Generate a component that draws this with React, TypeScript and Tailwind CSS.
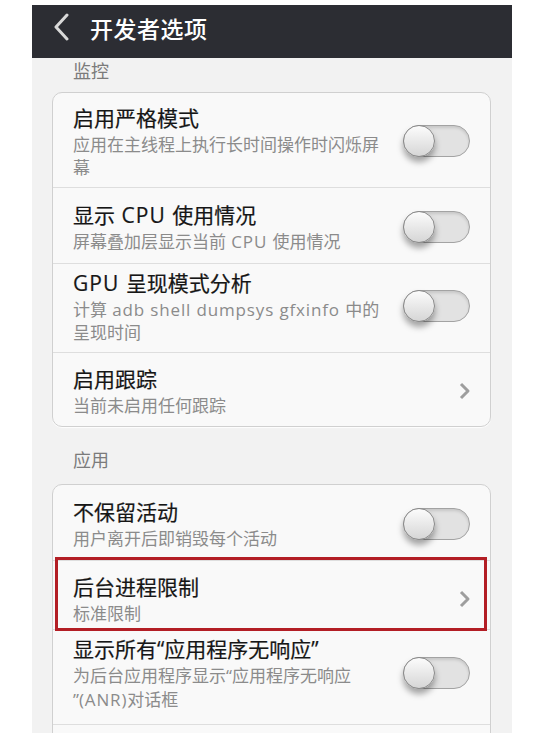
type Item = {
  title: string;
  sub: string[];
  control: "toggle" | "chevron";
  pad: string;
  subLead: string;
  highlight?: boolean;
};

const monitor: Item[] = [
  {
    title: "启用严格模式",
    sub: ["应用在主线程上执行长时间操作时闪烁屏", "幕"],
    control: "toggle",
    pad: "pt-[10px] pb-[8px]",
    subLead: "leading-[23px]",
  },
  {
    title: "显示 CPU 使用情况",
    sub: ["屏幕叠加层显示当前 CPU 使用情况"],
    control: "toggle",
    pad: "pt-[12px] pb-[10px]",
    subLead: "leading-[23px]",
  },
  {
    title: "GPU 呈现模式分析",
    sub: ["计算 adb shell dumpsys gfxinfo 中的", "呈现时间"],
    control: "toggle",
    pad: "pt-[4px] pb-[8px]",
    subLead: "leading-[23px]",
  },
  {
    title: "启用跟踪",
    sub: ["当前未启用任何跟踪"],
    control: "chevron",
    pad: "pt-[11px] pb-[9px]",
    subLead: "leading-[23px]",
  },
];

const apps: Item[] = [
  {
    title: "不保留活动",
    sub: ["用户离开后即销毁每个活动"],
    control: "toggle",
    pad: "pt-[12px] pb-[10px]",
    subLead: "leading-[23px]",
  },
  {
    title: "后台进程限制",
    sub: ["标准限制"],
    control: "chevron",
    pad: "pt-[11px] pb-[4px]",
    subLead: "leading-[23px]",
    highlight: true,
  },
  {
    title: "显示所有“应用程序无响应”",
    sub: ["为后台应用程序显示“应用程序无响应", "”(ANR)对话框"],
    control: "toggle",
    pad: "pt-[4px] pb-[12px]",
    subLead: "leading-[24px]",
  },
];

// latin runs in this UI are set a little wider than the CJK font gives them
const mixed = (text: string) =>
  text.split(/([\x20-\x7e]+)/).map((part, i) =>
    /[A-Za-z]/.test(part) ? (
      <span key={i} className="tracking-[0.05em]">
        {part}
      </span>
    ) : (
      part
    )
  );

const Toggle = () => (
  <div className="relative w-[67px] h-[32px] shrink-0 rounded-full border border-[#a3a3a3] bg-[#e2e2e2] shadow-[inset_0_2px_3px_rgba(0,0,0,0.12)]">
    <div className="absolute -left-px -top-px w-[32px] h-[32px] rounded-full border border-[#8a8a8a] bg-gradient-to-b from-[#fcfcfc] to-[#d6d6d6] shadow-[0_5px_6px_rgba(0,0,0,0.35)]" />
  </div>
);

const Chevron = () => (
  <svg width="14" height="18" viewBox="0 0 14 18" className="shrink-0 mr-[-2px]">
    <path d="M3 2 L10 9 L3 16" fill="none" stroke="#9e9e9e" strokeWidth="3" strokeLinejoin="round" />
  </svg>
);

const Row = ({ item, first }: { item: Item; first: boolean }) => (
  <div
    className={`relative flex items-center justify-between pl-[20px] pr-[20px] ${item.pad} ${
      first ? "" : "border-t border-[#dedede]"
    }`}
  >
    <div className="whitespace-nowrap">
      <div className="text-[21px] leading-[30px] text-[#161616] [-webkit-text-stroke:0.2px_#161616]">
        {mixed(item.title)}
      </div>
      {item.sub.map((line) => (
        <div key={line} className={`text-[17px] ${item.subLead} text-[#8b8b8b]`}>
          {mixed(line)}
        </div>
      ))}
    </div>
    {item.control === "toggle" ? <Toggle /> : <Chevron />}
    {item.highlight && (
      <div className="absolute left-[2px] right-[3px] -top-[4px] -bottom-[2px] z-10 border-[3px] border-[#b31e25] pointer-events-none" />
    )}
  </div>
);

const Card = ({ items, tail }: { items: Item[]; tail?: boolean }) => (
  <div className="mx-[20px] w-[439px] rounded-[10px] border border-[#d0d0d0] bg-[#f9f9f9] shadow-[0_1px_1px_rgba(255,255,255,0.9)]">
    {items.map((item, i) => (
      <Row key={item.title} item={item} first={i === 0} />
    ))}
    {tail && <div className="h-[76px] border-t border-[#dedede]" />}
  </div>
);

const Label = ({ text, className }: { text: string; className: string }) => (
  <div className={`pl-[41px] h-[26px] text-[18px] leading-[26px] text-[#7b7b7b] ${className}`}>{text}</div>
);

export default function App() {
  return (
    <div
      className="min-h-[740px] bg-white pt-[5px] pl-[32px]"
      style={{ fontFamily: '"Open Sans", "Noto Sans CJK SC", sans-serif' }}
    >
      <div className="w-[480px] h-[728px] overflow-hidden bg-[#f2f2f2]">
        <div className="h-[53px] bg-[#2c2d33] flex items-center">
          <svg width="18" height="28" viewBox="0 0 18 28" className="ml-[20px] -mt-[9px]">
            <path d="M15 2 L4 14 L15 26" fill="none" stroke="#d9d9d9" strokeWidth="3" strokeLinecap="round" strokeLinejoin="round" />
          </svg>
          <div className="ml-[20px] -mt-[4px] text-[23px] font-medium text-white tracking-[0.5px]">开发者选项</div>
        </div>
        <Label text="监控" className="mt-0" />
        <div className="mt-[8px]">
          <Card items={monitor} />
        </div>
        <Label text="应用" className="mt-[20px]" />
        <div className="mt-[11px]">
          <Card items={apps} tail />
        </div>
      </div>
    </div>
  );
}
